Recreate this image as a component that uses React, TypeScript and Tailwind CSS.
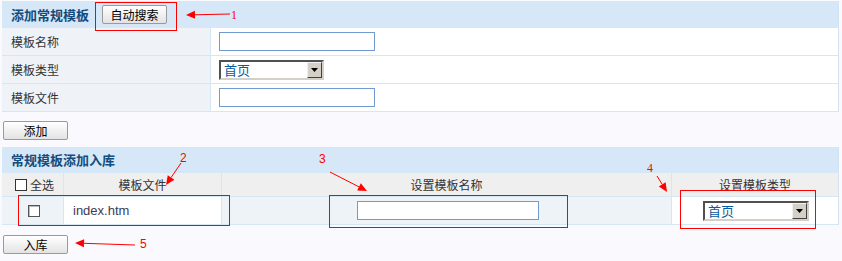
import React from 'react';

const cjk = { fontFamily: '"Noto Sans CJK SC", "Liberation Sans", sans-serif' };

function TextBox({ className = '' }: { className?: string }) {
  return <div className={`h-[19px] border border-[#6f9bd1] bg-white ${className}`} />;
}

function Dropdown({ className = '' }: { className?: string }) {
  return (
    <div className={`flex h-[20px] border-2 border-t-[#505050] border-l-[#505050] border-b-[#d4d0c8] border-r-[#d4d0c8] bg-white ${className}`}>
      <span className="flex-1 pl-[3px] text-[13px] leading-[15px] text-[#0b5c9c]">首页</span>
      <span className="flex w-[15px] items-center justify-center border border-t-[#f0f0f0] border-l-[#f0f0f0] border-b-[#404040] border-r-[#404040] bg-[#d4d0c8]">
        <svg width="7" height="4" viewBox="0 0 7 4"><path d="M0 0h7L3.5 4z" fill="#000" /></svg>
      </span>
    </div>
  );
}

function Btn({ label, className = '' }: { label: string; className?: string }) {
  return (
    <div className={`flex h-[19px] w-[65px] items-center justify-center rounded-[2px] border border-[#9a9a9a] bg-gradient-to-b from-white to-[#e3e3e3] text-[12px] text-black ${className}`}>
      {label}
    </div>
  );
}

function CheckBox({ dark = false }: { dark?: boolean }) {
  return (
    <span className={`inline-block h-[12px] w-[12px] border bg-white ${dark ? 'border-[#333]' : 'border-[#555] shadow-[inset_1px_1px_0_#bbb]'}`} />
  );
}

function Arrow({ x1, y1, x2, y2 }: { x1: number; y1: number; x2: number; y2: number }) {
  const a = Math.atan2(y2 - y1, x2 - x1);
  const l = 9;
  const w = 4;
  const bx = x2 - l * Math.cos(a);
  const by = y2 - l * Math.sin(a);
  const p1 = `${bx - w * Math.sin(a)},${by + w * Math.cos(a)}`;
  const p2 = `${bx + w * Math.sin(a)},${by - w * Math.cos(a)}`;
  return (
    <>
      <line x1={x1} y1={y1} x2={bx} y2={by} stroke="#ff0000" strokeWidth="1" />
      <polygon points={`${x2},${y2} ${p1} ${p2}`} fill="#ff0000" />
    </>
  );
}

export default function App() {
  return (
    <div className="relative h-[261px] w-[842px] overflow-hidden bg-[#f9f9fe] pl-[2px] pr-[3px] pt-[1px] text-[12px] text-[#333]" style={cjk}>
      {/* Add template form */}
      <div className="border-r border-[#d2e4f3]">
        <div className="flex h-[27px] items-center bg-[#d6e7f7] pl-[9px]">
          <span className="text-[13px] font-bold text-[#144c7c]">添加常规模板</span>
          <Btn label="自动搜索" className="ml-[13px] w-[64px]" />
        </div>
        {['模板名称', '模板类型', '模板文件'].map((label, i) => (
          <div key={label} className="grid h-[28px] grid-cols-[209px_1fr] border-b border-[#d6e6f2]">
            <div className="flex items-center border-r border-[#d6e6f2] bg-[#eff3f8] pl-[9px] text-[#333]">{label}</div>
            <div className="flex items-center bg-white pl-[8px]">
              {i === 1 ? <Dropdown className="w-[105px]" /> : <TextBox className="w-[156px]" />}
            </div>
          </div>
        ))}
      </div>

      <Btn label="添加" className="mt-[9px] ml-[1px]" />

      {/* Import table */}
      <div className="mt-[7px] border-r border-[#d2e4f3]">
        <div className="flex h-[26px] items-center bg-[#d6e7f7] pl-[9px]">
          <span className="text-[13px] font-bold text-[#144c7c]">常规模板添加入库</span>
        </div>
        <div className="grid h-[24px] grid-cols-[62px_158px_450px_1fr] border-b border-[#d6e6f2] bg-[#efefef] text-[#333]">
          <div className="flex items-center gap-[3px] border-r border-[#d6e6f2] pl-[13px]">
            <CheckBox dark />
            <span>全选</span>
          </div>
          <div className="flex items-center justify-center border-r border-[#d6e6f2]">模板文件</div>
          <div className="flex items-center justify-center border-r border-[#d6e6f2]">设置模板名称</div>
          <div className="flex items-center justify-center">设置模板类型</div>
        </div>
        <div className="grid h-[28px] grid-cols-[62px_158px_450px_1fr] border-b border-[#d6e6f2]">
          <div className="flex items-center justify-center border-r border-[#d6e6f2] bg-[#eef3f8] pl-[2px]">
            <CheckBox />
          </div>
          <div className="flex items-center border-r border-[#d6e6f2] bg-white pl-[9px] text-[13px] text-[#3a3a5a]" style={{ fontFamily: '"Liberation Sans", Arial, sans-serif' }}>
            index.htm
          </div>
          <div className="flex items-center justify-center border-r border-[#d6e6f2] bg-[#eef3f8] pl-[3px]">
            <TextBox className="w-[182px]" />
          </div>
          <div className="flex items-center justify-center bg-white pl-[2px]">
            <Dropdown className="w-[106px]" />
          </div>
        </div>
      </div>

      <Btn label="入库" className="mt-[10px] ml-[1px]" />

      {/* Annotations */}
      <svg className="pointer-events-none absolute left-0 top-0" width="842" height="261">
        <rect x="95.5" y="2.5" width="81" height="28" fill="none" stroke="#ff0000" />
        <rect x="18.5" y="195.5" width="211" height="30" fill="none" stroke="#ff0000" />
        <rect x="329.5" y="195.5" width="238" height="32" fill="none" stroke="#ff0000" />
        <rect x="680.5" y="190.5" width="135" height="38" fill="none" stroke="#ff0000" />
        <Arrow x1={230} y1={14} x2={186} y2={15} />
        <Arrow x1={181} y1={163} x2={166} y2={185} />
        <Arrow x1={330} y1={172} x2={367} y2={191} />
        <Arrow x1={657} y1={176} x2={667} y2={192} />
        <Arrow x1={135} y1={245} x2={75} y2={243} />
        <text x="231" y="19" fill="#ff0000" fontSize="12" fontFamily="Liberation Serif, serif">1</text>
        <text x="180" y="162" fill="#ff0000" fontSize="12" fontFamily="Liberation Sans, sans-serif">2</text>
        <text x="319" y="163" fill="#ff0000" fontSize="12" fontFamily="Liberation Sans, sans-serif">3</text>
        <text x="647" y="172" fill="#ff0000" fontSize="12" fontFamily="Liberation Serif, serif">4</text>
        <text x="140" y="248" fill="#ff0000" fontSize="12" fontFamily="Liberation Sans, sans-serif">5</text>
      </svg>
    </div>
  );
}
